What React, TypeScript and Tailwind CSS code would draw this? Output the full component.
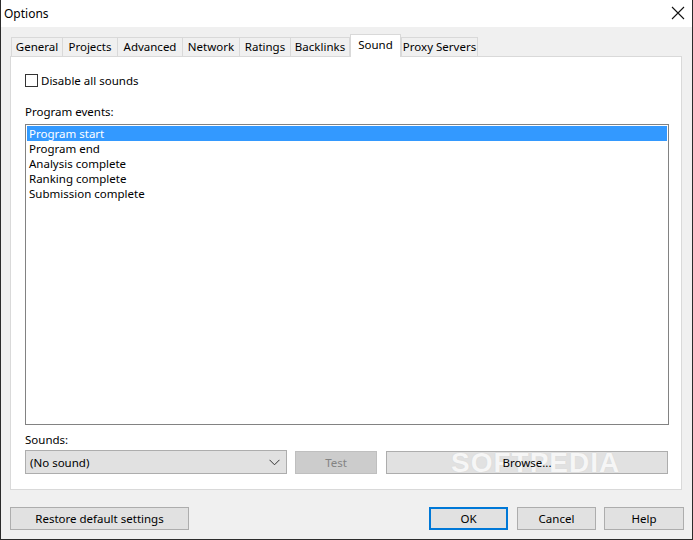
import React from "react";

const tabs = [
  { name: "General", w: 52, ml: 0 },
  { name: "Projects", w: 56, ml: -1 },
  { name: "Advanced", w: 66, ml: -1 },
  { name: "Network", w: 58, ml: -1 },
  { name: "Ratings", w: 52, ml: -1 },
  { name: "Backlinks", w: 60, ml: -1 },
  { name: "Sound", w: 51, ml: 0, active: true },
  { name: "Proxy Servers", w: 77, ml: 0 },
];

const events = ["Program start", "Program end", "Analysis complete", "Ranking complete", "Submission complete"];

export default function App() {
  return (
    <div
      className="w-[693px] h-[540px] flex flex-col border-l border-r border-b border-[#2b2b2b] bg-[#f0f0f0] text-[11.5px] text-black overflow-hidden"
      style={{ fontFamily: '"Noto Sans", "Open Sans", sans-serif' }}
    >
      {/* Title bar */}
      <div className="h-[27px] bg-white flex items-center justify-between pl-[3px] pr-[7px] shrink-0">
        <span className="text-[12px] leading-none">Options</span>
        <svg width="14" height="14" viewBox="0 0 14 14" className="mt-[-1px]">
          <path d="M1 1 L13 13 M13 1 L1 13" stroke="#111" strokeWidth="1.1" />
        </svg>
      </div>

      {/* Body */}
      <div className="flex-1 flex flex-col pl-[9px] pr-[9px] pt-[7px]">
        {/* Tabs */}
        <div className="flex items-end pl-[1px] h-[23px] relative z-10 -mb-px">
          {tabs.map((t) =>
            t.active ? (
              <div
                key={t.name}
                className="h-[23px] shrink-0 whitespace-nowrap bg-white border border-b-0 border-[#d9d9d9] flex items-start justify-center pt-[2px] leading-[15px]"
                style={{ width: t.w, marginLeft: t.ml }}
              >
                {t.name}
              </div>
            ) : (
              <div
                key={t.name}
                className="h-[20px] shrink-0 whitespace-nowrap bg-[#f0f0f0] border border-[#d9d9d9] flex items-center justify-center pb-[2px] leading-[15px]"
                style={{ width: t.w, marginLeft: t.ml }}
              >
                {t.name}
              </div>
            )
          )}
        </div>

        {/* Panel */}
        <div className="w-[672px] h-[434px] bg-white border border-[#d9d9d9] flex flex-col pl-[14px]">
          <div className="flex items-center mt-[16px] h-[15px]">
            <div className="w-[13px] h-[13px] border border-[#333333] bg-white" />
            <span className="ml-[3px] leading-[15px]">Disable all sounds</span>
          </div>
          <div className="mt-[16px] leading-[15px]">Program events:</div>
          <div className="mt-[5px] w-[644px] h-[301px] border border-[#828282] bg-white pt-[1px] px-[1px]">
            {events.map((e, i) => (
              <div
                key={e}
                className={
                  "h-[15px] leading-[15px] pl-[2px] whitespace-nowrap " +
                  (i === 0 ? "bg-[#3399ff] text-white" : "")
                }
              >
                {e}
              </div>
            ))}
          </div>
          <div className="mt-[7px] leading-[15px]">Sounds:</div>
          <div className="mt-[3px] flex items-start">
            <div className="w-[262px] h-[24px] bg-[#e1e1e1] border border-[#adadad] flex items-center justify-between pl-[4px] pr-[6px]">
              <span className="leading-[15px]">(No sound)</span>
              <svg width="11" height="7" viewBox="0 0 11 7">
                <path d="M0.5 0.8 L5.5 5.8 L10.5 0.8" stroke="#333" strokeWidth="1" fill="none" />
              </svg>
            </div>
            <div className="ml-[8px] mt-[1px] w-[82px] h-[23px] bg-[#cccccc] border border-[#bfbfbf] flex items-center justify-center text-[#838383]">
              Test
            </div>
            <div className="ml-[9px] mt-[1px] w-[282px] h-[23px] bg-[#e1e1e1] border border-[#adadad] flex items-center justify-center relative">
              <span
                className="absolute left-[64px] top-[-3px] text-[28px] font-bold tracking-[1px] text-white opacity-70 leading-none pointer-events-none z-0"
                style={{ fontFamily: '"Liberation Sans", Arial, sans-serif', textShadow: "0 0 1px #c8c8c8" }}
              >
                SOFTPEDIA
              </span>
              <span className="relative z-10">Browse...</span>
            </div>
          </div>
        </div>

        {/* Bottom buttons */}
        <div className="mt-[17px] flex items-start">
          <div className="w-[179px] h-[23px] bg-[#e1e1e1] border border-[#adadad] flex items-center justify-center">
            Restore default settings
          </div>
          <div className="flex-1" />
          <div className="w-[79px] h-[23px] bg-[#e1e1e1] border-2 border-[#0078d7] flex items-center justify-center">
            OK
          </div>
          <div className="ml-[9px] w-[79px] h-[23px] bg-[#e1e1e1] border border-[#adadad] flex items-center justify-center">
            Cancel
          </div>
          <div className="ml-[8px] w-[80px] h-[23px] bg-[#e1e1e1] border border-[#adadad] flex items-center justify-center -mr-[1px]">
            Help
          </div>
        </div>
      </div>
    </div>
  );
}
